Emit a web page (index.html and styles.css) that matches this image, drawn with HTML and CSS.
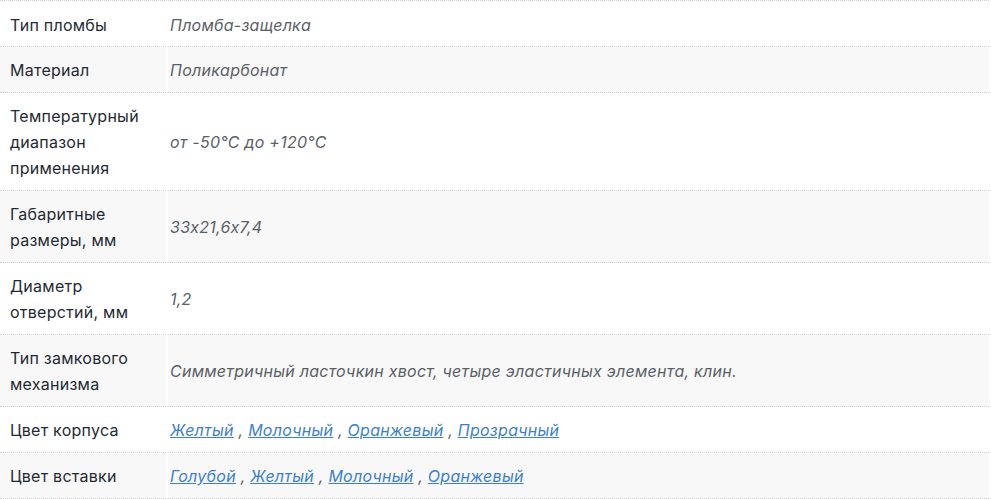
FILE: index.html
```html
<!DOCTYPE html>
<html lang="ru">
<head>
<meta charset="utf-8">
<link rel="stylesheet" href="styles.css">
</head>
<body>
<table class="props">
  <tbody>
    <tr class="first"><td class="name">Тип пломбы</td><td class="val">Пломба-защелка</td></tr>
    <tr class="alt"><td class="name">Материал</td><td class="val">Поликарбонат</td></tr>
    <tr><td class="name">Температурный диапазон применения</td><td class="val">от -50°C до +120°C</td></tr>
    <tr class="alt"><td class="name">Габаритные размеры, мм</td><td class="val">33x21,6x7,4</td></tr>
    <tr><td class="name">Диаметр отверстий, мм</td><td class="val">1,2</td></tr>
    <tr class="alt"><td class="name">Тип замкового механизма</td><td class="val">Симметричный ласточкин хвост, четыре эластичных элемента, клин.</td></tr>
    <tr><td class="name">Цвет корпуса</td><td class="val"><a href="#">Желтый</a> , <a href="#">Молочный</a> , <a href="#">Оранжевый</a> , <a href="#">Прозрачный</a></td></tr>
    <tr class="alt"><td class="name">Цвет вставки</td><td class="val"><a href="#">Голубой</a> , <a href="#">Желтый</a> , <a href="#">Молочный</a> , <a href="#">Оранжевый</a></td></tr>
  </tbody>
</table>
</body>
</html>
```
FILE: styles.css
```css
html, body {
  margin: 0;
  padding: 0;
  background: #fff;
}
body {
  font-family: Inter, "Noto Sans", sans-serif;
  font-size: 16px;
  font-feature-settings: "calt" 0;
  letter-spacing: 0.25px;
  color: #1f2a33;
}
.props {
  width: 989px;
  border-collapse: separate;
  border-spacing: 0;
  border-top: 1px dotted #cfcfcf;
}
.props td {
  vertical-align: middle;
  line-height: 26px;
  padding: 10px 0 9px;
  border-bottom: 1px dotted #cfcfcf;
}
.props .first td {
  padding-top: 11px;
  padding-bottom: 8px;
}
.props .name {
  width: 156px;
  padding-left: 10px;
  border-right: 2px solid #fff;
}
.props .val {
  padding-left: 2px;
  font-style: italic;
  color: #5a6066;
}
.props .alt td {
  background: #f8f8f8;
}
.props a {
  color: #3d7fcc;
  text-decoration: underline;
}
```
